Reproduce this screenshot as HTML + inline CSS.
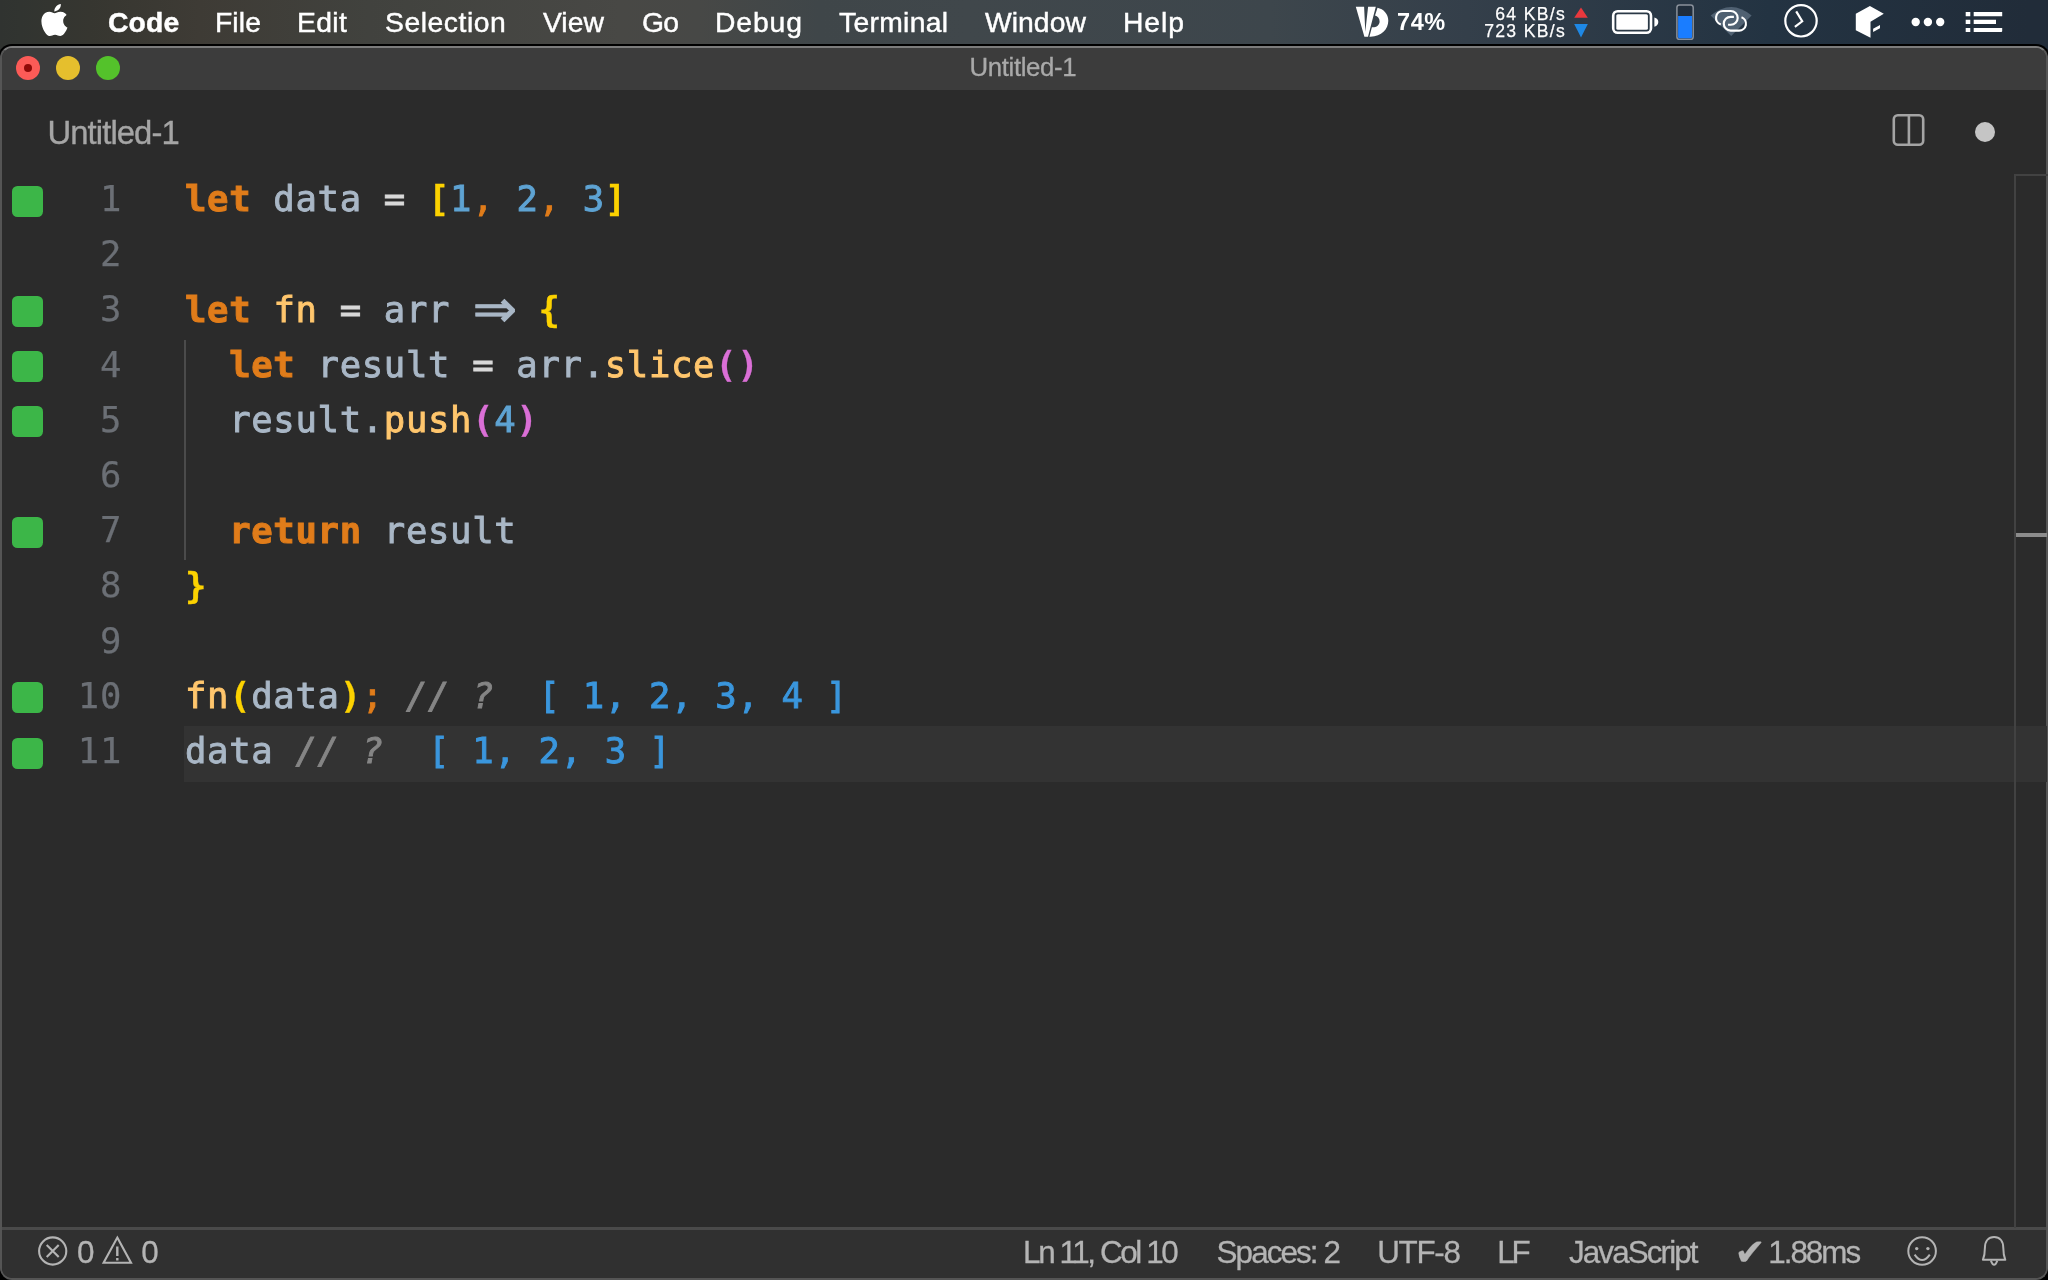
<!DOCTYPE html>
<html lang="en">
<head>
<meta charset="utf-8">
<title>Untitled-1</title>
<style>
*{margin:0;padding:0;box-sizing:border-box}
html,body{width:2048px;height:1280px;overflow:hidden;background:#000}
body{position:relative;font-family:"Liberation Sans",sans-serif;-webkit-font-smoothing:antialiased}
.abs{position:absolute}
#menubar .mi,#win{will-change:transform}
/* ---------- menu bar ---------- */
#menubar{position:absolute;left:0;top:0;width:2048px;height:62px;
 background:linear-gradient(90deg,#303330 0%,#313430 1%,#363630 4.4%,#3e3b35 9.7%,#41423e 18%,#484845 30.3%,#474846 34.1%,#3f4649 40%,#40474b 47.2%,#3d464c 62%,#343f4a 71.6%,#233342 86.4%,#212c39 99%)}
#menubar .mi{position:absolute;top:0.3px;height:44px;line-height:44px;color:#fff;font-size:28.3px;white-space:nowrap;-webkit-text-stroke:0.45px #fff}
#menubar .b{font-weight:bold}
#menubar .sm{font-size:17.6px;letter-spacing:1.3px;-webkit-text-stroke:0.25px #fff}
/* ---------- window ---------- */
#frame{position:absolute;left:0;top:46px;width:2048px;height:1234px;background:#2b2b2b;border:2px solid #555;border-top-color:#7c7c7c;border-radius:12px;overflow:hidden;
 box-shadow:0 0 0 2px #000}
#frame .tb{position:absolute;left:0;top:0;width:100%;height:42px;background:#3c3c3c}
#frame .sb{position:absolute;left:0;top:1178.6px;width:100%;height:52px;background:#303030;border-top:3px solid #4a4a4a}
#win{position:absolute;left:0;top:45px;width:2048px;height:1235px}
#titlebar{position:absolute;left:0;top:0;width:100%;height:45px}
#title{position:absolute;top:-0.3px;height:45px;line-height:45px;color:#a9a9a9;font-size:25.8px;white-space:nowrap;-webkit-text-stroke:0.3px #a9a9a9}
.tl{position:absolute;top:11px;width:24px;height:24px;border-radius:50%}
#tabtitle{position:absolute;top:68px;font-size:32.8px;line-height:40px;color:#a5a5a5;white-space:nowrap;-webkit-text-stroke:0.35px #a5a5a5}
/* editor */
#editor{position:absolute;left:0;top:129px;width:2047px;height:1054px;font-family:"DejaVu Sans Mono","Liberation Mono",monospace;font-size:35.6px;letter-spacing:0.67px}
.ln{position:absolute;left:0;height:55.2px;line-height:55.2px;white-space:pre}
.num{position:absolute;left:0;margin-top:-3px;width:122px;text-align:right;color:#6b6f75;-webkit-text-stroke:0.25px;height:55.2px;line-height:55.2px}
.sq{position:absolute;left:12px;width:30.6px;height:31px;border-radius:5.5px;background:#3cb648}
.code{position:absolute;left:185px;margin-top:-2.6px;height:55.2px;line-height:55.2px;white-space:pre;color:#a9b7c6;-webkit-text-stroke:0.9px}
.ar{display:inline-block;width:44.2px;text-align:center;font-family:"DejaVu Sans",sans-serif;font-size:53px;line-height:20px;letter-spacing:0;-webkit-text-stroke:0.9px;position:relative;top:5.5px;left:0.5px}
.kw{color:#e07c1a;font-weight:bold}
.fn{color:#ffc66d}
.br{color:#fcd200;font-weight:bold;-webkit-text-stroke:0.3px}
.br2{color:#da6fd6;font-weight:bold;-webkit-text-stroke:0.3px}
.n{color:#5ea3d3}
.pu{color:#e07c1a}
.op{color:#d8d8d8}
.cm{color:#858585;font-style:italic}
.res{color:#3a96dd}
/* status */
#status{position:absolute;left:0;top:1182px;width:2047px;height:53px;padding-top:3px}
#status .si{position:absolute;top:2px;height:48px;line-height:48px;font-size:31.4px;color:#b4b4b4;white-space:nowrap;letter-spacing:-1.2px;-webkit-text-stroke:0.3px #b4b4b4}
</style>
</head>
<body>
<div id="menubar">
  <div class="mi b" id="m_code" style="left:107.6px;letter-spacing:0.16px">Code</div>
  <div class="mi" id="m_file" style="left:215.1px;letter-spacing:0.09px">File</div>
  <div class="mi" id="m_edit" style="left:297.0px;letter-spacing:0.38px">Edit</div>
  <div class="mi" id="m_selection" style="left:384.8px;letter-spacing:0.55px">Selection</div>
  <div class="mi" id="m_view" style="left:543.1px;letter-spacing:0.00px">View</div>
  <div class="mi" id="m_go" style="left:641.7px;letter-spacing:-0.80px">Go</div>
  <div class="mi" id="m_debug" style="left:715.1px;letter-spacing:0.90px">Debug</div>
  <div class="mi" id="m_terminal" style="left:839.4px;letter-spacing:0.31px">Terminal</div>
  <div class="mi" id="m_window" style="left:985.3px;letter-spacing:0.04px">Window</div>
  <div class="mi" id="m_help" style="left:1123.1px;letter-spacing:0.91px">Help</div>

  <svg class="abs" style="left:41.4px;top:4px" width="27" height="32" viewBox="2.2 0 19.7 24"><path fill="#fff" d="M12.152 6.896c-.948 0-2.415-1.078-3.96-1.04-2.04.027-3.91 1.183-4.961 3.014-2.117 3.675-.546 9.103 1.519 12.09 1.013 1.454 2.208 3.09 3.792 3.039 1.52-.065 2.09-.987 3.935-.987 1.831 0 2.35.987 3.96.948 1.637-.026 2.676-1.48 3.676-2.948 1.156-1.688 1.636-3.325 1.662-3.415-.039-.013-3.182-1.221-3.22-4.857-.026-3.04 2.48-4.494 2.597-4.559-1.429-2.09-3.623-2.324-4.39-2.376-2-.156-3.675 1.09-4.61 1.09zM15.53 3.83c.843-1.012 1.4-2.427 1.245-3.83-1.207.052-2.662.805-3.532 1.818-.78.896-1.454 2.338-1.273 3.714 1.338.104 2.715-.688 3.559-1.701"/></svg>
  <svg class="abs" style="left:1350px;top:2px" width="50" height="40" viewBox="0 0 50 40">
    <path fill="#fff" d="M5.8 4.8 L14.1 4.8 L15.3 29.7 L18.1 4.8 L25.8 4.8 L18 34.7 L14.4 34.7 Z"/>
    <path fill="#fff" fill-rule="evenodd" d="M27.5 5.8 C33.5 7 38.3 12 38.3 18.8 C38.3 27 31.5 34.7 20.5 34.7 L19.4 34.7 L21.9 25.3 C26.5 25.6 29.6 22.8 29.6 19.4 C29.6 16.2 27.6 14 25 13.4 Z"/>
  </svg>
  <div class="mi b" id="pct" style="left:1397px;top:-0.5px;font-size:23.5px;letter-spacing:0.6px;-webkit-text-stroke:0">74%</div>
  <div class="mi sm" style="left:1440.5px;width:125px;text-align:right;top:4.5px;height:18px;line-height:18px">64 KB/s</div>
  <div class="mi sm" style="left:1440.5px;width:125px;text-align:right;top:22.3px;height:18px;line-height:18px">723 KB/s</div>
  <svg class="abs" style="left:1570px;top:0" width="24" height="44" viewBox="0 0 24 44">
    <path fill="#e8383d" d="M4.2 17.8 L11 7.4 L17.8 17.8 Z"/>
    <path fill="#1e88e5" d="M4.2 24.1 L17.8 24.1 L11 37.6 Z"/>
  </svg>
  <svg class="abs" style="left:1606px;top:0" width="60" height="44" viewBox="0 0 60 44">
    <rect x="7.2" y="11.2" width="37.8" height="21.6" rx="4.5" fill="none" stroke="#fff" stroke-width="2.6"/>
    <rect x="10.3" y="14.3" width="31.6" height="15.4" rx="1.5" fill="#fff"/>
    <path fill="#fff" d="M48.4 17.4 C51.2 18 52.3 20 52.3 22 C52.3 24 51.2 26 48.4 26.7 Z"/>
  </svg>
  <svg class="abs" style="left:1670px;top:0" width="30" height="44" viewBox="0 0 30 44">
    <rect x="6.9" y="5" width="16.3" height="34.3" rx="2.6" fill="rgba(10,20,30,0.25)" stroke="#8a919b" stroke-width="1.5"/>
    <path fill="#1a7dff" d="M8.1 16 H22 V37 Q22 38.2 20.8 38.2 H9.3 Q8.1 38.2 8.1 37 Z"/>
  </svg>
  <svg class="abs" style="left:1704px;top:0" width="54" height="44" viewBox="0 0 54 44">
    <path fill="#506172" d="M6.7 15.5 Q27.2 -1.7 47.6 15.5 L27.2 36.1 Z"/>
    <path d="M24.06 24.75 L26.8 24.75 A6.875 6.875 0 0 0 26.8 11 L18.9 11 A6.875 6.875 0 0 0 16.8 24.42" fill="none" stroke="#fff" stroke-width="2.15"/>
    <path d="M29.9 16.84 L26.65 16.84 A6.875 6.875 0 0 0 26.65 30.6 L35.07 30.6 A6.875 6.875 0 0 0 37.5 17.29" fill="none" stroke="#fff" stroke-width="2.15"/>
  </svg>
  <svg class="abs" style="left:1780px;top:0" width="44" height="44" viewBox="0 0 44 44">
    <circle cx="21" cy="20.8" r="15.7" fill="none" stroke="#fff" stroke-width="2.2"/>
    <path d="M16.2 11.4 L22.2 21.3 L14.9 26.8" fill="none" stroke="#fff" stroke-width="2.2" stroke-linejoin="miter"/>
  </svg>
  <svg class="abs" style="left:1850px;top:0" width="40" height="44" viewBox="0 0 40 44">
    <path fill="#fff" d="M19.9 5.9 L33.8 13.8 L20.5 21.8 L20.5 37.8 L5.8 30.3 L5.8 13.8 Z"/>
    <path fill="#fff" d="M23.1 28.7 L30 25 L30 28.2 L23.1 31.9 Z"/>
  </svg>
  <svg class="abs" style="left:1906px;top:0" width="44" height="44" viewBox="0 0 44 44">
    <circle cx="9.7" cy="22" r="4.2" fill="#fff"/><circle cx="21.9" cy="22" r="4.2" fill="#fff"/><circle cx="34.2" cy="22" r="4.2" fill="#fff"/>
  </svg>
  <svg class="abs" style="left:1960px;top:0" width="48" height="44" viewBox="0 0 48 44">
    <path fill="#fff" d="M5.7 11.9h4.6v4.3h-4.6z M13.7 11.9h28.5v4.3h-28.5z M5.7 19.7h4.6v4.3h-4.6z M13.7 19.7h22.3v4.3h-22.3z M5.7 27.9h4.6v4h-4.6z M13.7 27.9h28.5v3q0 1-1 1h-27.5z"/>
  </svg>
</div>
<div id="frame"><div class="tb"></div><div class="sb"></div></div>
<div id="win">
  <div id="titlebar">
    <div class="tl" style="left:16px;background:#fc5b57"></div>
    <div class="abs" style="left:24px;top:19px;width:8px;height:8px;border-radius:50%;background:#8f0a08"></div>
    <div class="tl" style="left:56px;background:#e5bf2d"></div>
    <div class="tl" style="left:96px;background:#54c22b"></div>
    <div id="title" style="left:969.5px;letter-spacing:-0.36px">Untitled-1</div>
  </div>
  <div id="tabtitle" style="left:47.5px;letter-spacing:-0.91px">Untitled-1</div>
  <svg class="abs" style="left:1888px;top:65px" width="40" height="40" viewBox="0 0 40 40">
    <rect x="5.8" y="5.3" width="29.4" height="29.4" rx="4" fill="none" stroke="#a4a4a4" stroke-width="2.6"/>
    <rect x="19.6" y="5.4" width="2.6" height="29.2" fill="#a4a4a4"/>
  </svg>
  <div class="abs" style="left:1975px;top:76.5px;width:20px;height:20px;border-radius:50%;background:#c5c5c5"></div>
  <div id="editor">
    <div class="abs" style="left:184px;top:552px;width:1863px;height:56px;background:#333333"></div>
    <div class="abs" style="left:184px;top:165.6px;width:2px;height:220.8px;background:#4b4b4b"></div>
    <div class="sq" style="top:11.6px"></div>
    <div class="num" style="top:0.0px">1</div>
    <div class="code" style="top:0.0px"><span class="kw">let</span> data <span class="op">=</span> <span class="br">[</span><span class="n">1</span><span class="pu">,</span> <span class="n">2</span><span class="pu">,</span> <span class="n">3</span><span class="br">]</span></div>
    <div class="num" style="top:55.2px">2</div>
    <div class="sq" style="top:122.0px"></div>
    <div class="num" style="top:110.4px">3</div>
    <div class="code" style="top:110.4px"><span class="kw">let</span> <span class="fn">fn</span> <span class="op">=</span> arr <span class="ar">⇒</span> <span class="br">{</span></div>
    <div class="sq" style="top:177.2px"></div>
    <div class="num" style="top:165.6px">4</div>
    <div class="code" style="top:165.6px">  <span class="kw">let</span> result <span class="op">=</span> arr.<span class="fn">slice</span><span class="br2">()</span></div>
    <div class="sq" style="top:232.4px"></div>
    <div class="num" style="top:220.8px">5</div>
    <div class="code" style="top:220.8px">  result.<span class="fn">push</span><span class="br2">(</span><span class="n">4</span><span class="br2">)</span></div>
    <div class="num" style="top:276.0px">6</div>
    <div class="sq" style="top:342.8px"></div>
    <div class="num" style="top:331.2px">7</div>
    <div class="code" style="top:331.2px">  <span class="kw">return</span> result</div>
    <div class="num" style="top:386.4px">8</div>
    <div class="code" style="top:386.4px"><span class="br">}</span></div>
    <div class="num" style="top:441.6px">9</div>
    <div class="sq" style="top:508.4px"></div>
    <div class="num" style="top:496.8px">10</div>
    <div class="code" style="top:496.8px"><span class="fn">fn</span><span class="br">(</span>data<span class="br">)</span><span class="pu">;</span> <span class="cm">// ?</span>  <span class="res">[ 1, 2, 3, 4 ]</span></div>
    <div class="sq" style="top:563.6px"></div>
    <div class="num" style="top:552.0px">11</div>
    <div class="code" style="top:552.0px">data <span class="cm">// ?</span>  <span class="res">[ 1, 2, 3 ]</span></div>
    <div class="abs" style="left:2014px;top:0;width:34px;height:1054px;border-left:2px solid #424242;border-top:2px solid #424242"></div>
    <div class="abs" style="left:2016px;top:359px;width:31px;height:4px;background:#8c8c8c"></div>
  </div>
  <div id="status">
    <svg class="abs" style="left:30px;top:3px" width="140" height="50" viewBox="0 0 140 50">
      <circle cx="22.7" cy="21" r="13.6" fill="none" stroke="#b4b4b4" stroke-width="2.1"/>
      <path d="M16.7 15 L28.7 27 M28.7 15 L16.7 27" stroke="#b4b4b4" stroke-width="2.1" fill="none"/>
      <path d="M87.3 7.6 L101 32.8 L73.6 32.8 Z" fill="none" stroke="#b4b4b4" stroke-width="2.1" stroke-linejoin="miter"/>
      <path d="M87.3 16.5 V26 M87.3 28 V30.4" stroke="#b4b4b4" stroke-width="2.4" fill="none"/>
    </svg>
    <div class="si" style="left:77px">0</div>
    <div class="si" style="left:141.3px">0</div>
    <div class="si" id="s_ln" style="left:1023.1px;letter-spacing:-2.40px">Ln 11, Col 10</div>
    <div class="si" id="s_sp" style="left:1216.6px;letter-spacing:-1.91px">Spaces: 2</div>
    <div class="si" id="s_utf" style="left:1377.2px;letter-spacing:-1.29px">UTF-8</div>
    <div class="si" id="s_lf" style="left:1497.3px;letter-spacing:-3.20px">LF</div>
    <div class="si" id="s_js" style="left:1569.0px;letter-spacing:-1.89px">JavaScript</div>
    <div class="si" id="chk" style="left:1734.5px;top:1.5px;font-family:'DejaVu Sans',sans-serif;font-size:37px;letter-spacing:0">✔</div>
    <div class="si" id="s_ms" style="left:1768.3px;letter-spacing:-2.02px">1.88ms</div>
    <svg class="abs" style="left:1900px;top:3px" width="120" height="50" viewBox="0 0 120 50">
      <circle cx="22.1" cy="21" r="13.8" fill="none" stroke="#b4b4b4" stroke-width="2"/>
      <circle cx="16.7" cy="18.6" r="1.7" fill="#b4b4b4"/><circle cx="27.9" cy="18.6" r="1.7" fill="#b4b4b4"/>
      <path d="M14.6 24.6 Q22.1 35.5 29.8 24.6" fill="none" stroke="#b4b4b4" stroke-width="2"/>
      <path d="M82.9 29.8 C84.6 25.5 84.9 22 84.9 18 C84.9 11 88.6 7 94.1 7 C99.6 7 103.3 11 103.3 18 C103.3 22 103.6 25.5 105.3 29.8 Z" fill="none" stroke="#b4b4b4" stroke-width="2" stroke-linejoin="round"/>
      <path d="M90.9 30.6 Q94.1 39 97.3 30.6" fill="none" stroke="#b4b4b4" stroke-width="2"/>
    </svg>
  </div>
</div>
</body>
</html>
